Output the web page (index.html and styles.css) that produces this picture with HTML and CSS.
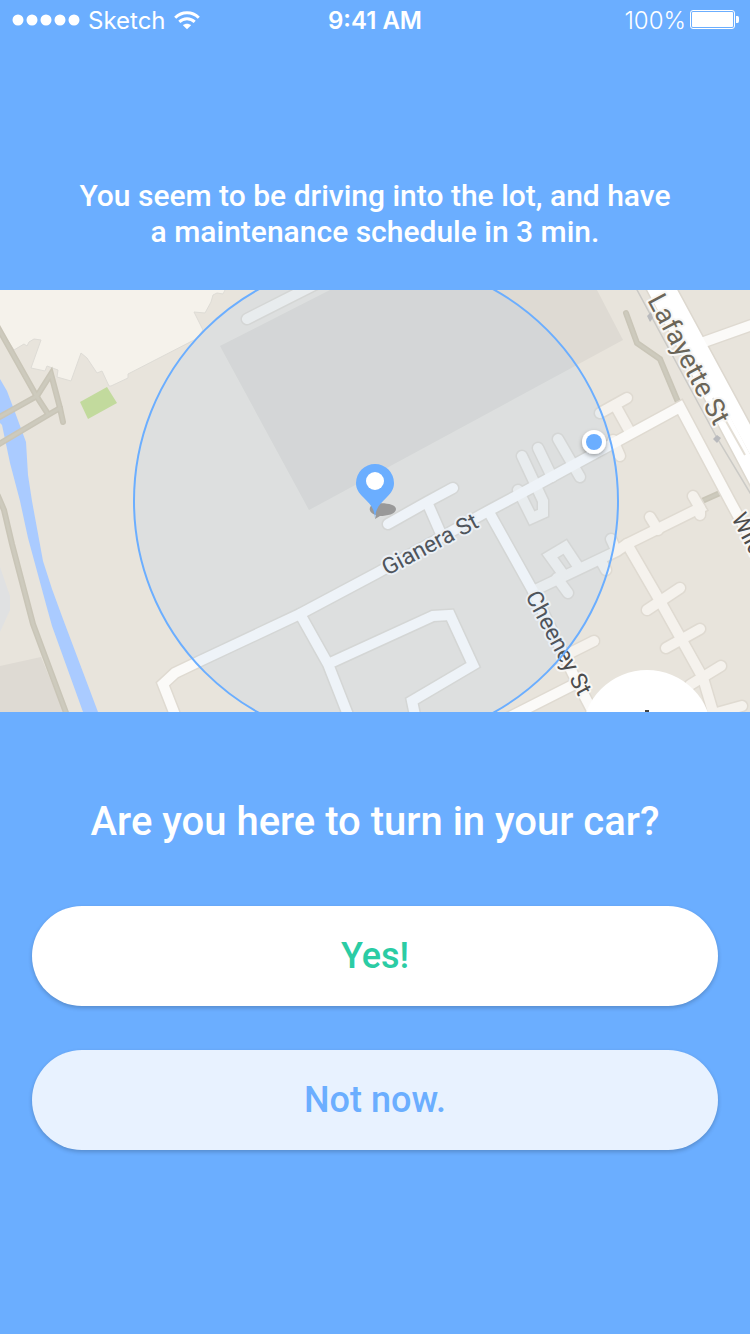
FILE: index.html
```html
<!DOCTYPE html>
<html lang="en">
	<head>
		<meta charset="utf-8" />
		<meta name="viewport" content="width=device-width, initial-scale=1" />
		<title>Turn in your car</title>
		<link rel="stylesheet" href="styles.css">
	</head>
	<body>

		<header class="status">
			<div class="carrier">
				<svg width="68" height="12" viewBox="0 0 68 12" aria-hidden="true">
					<g fill="#fff">
						<circle cx="6" cy="6" r="5.5"/>
						<circle cx="20" cy="6" r="5.5"/>
						<circle cx="34" cy="6" r="5.5"/>
						<circle cx="48" cy="6" r="5.5"/>
						<circle cx="62" cy="6" r="5.5"/>
					</g>
				</svg>
				<span>Sketch</span>
				<svg width="26" height="19" viewBox="0 0 26 19" aria-hidden="true">
					<g fill="none" stroke="#fff" stroke-width="2.9">
						<path d="M1.2 6.8C7.8 .1 18.2 .1 24.8 6.8"/>
						<path d="M5.3 10.9C9.6 6.6 16.4 6.6 20.7 10.9"/>
					</g>
					<path fill="#fff" d="M13 18.2L8.9 14.2C11.2 12.2 14.8 12.2 17.1 14.2z"/>
				</svg>
			</div>
			<div class="time">9:41 AM</div>
			<div class="battery">
				<span>100%</span>
				<svg width="50" height="20" viewBox="0 0 50 20" aria-hidden="true">
					<rect x=".5" y=".5" width="44" height="18" rx="2.5" fill="none" stroke="#fff"/>
					<rect x="2" y="2" width="41" height="15" rx="1" fill="#fff"/>
					<path fill="#fff" d="M46 6h1.5q1.5 0 1.5 2v3q0 2-1.5 2H46z"/>
				</svg>
			</div>
		</header>

		<main>
			<p class="notice">You seem to be driving into the lot, and have<br>a maintenance schedule in 3 min.</p>

			<svg class="map" viewBox="0 0 750 422" role="img" aria-label="Map around Gianera St">
				<defs>
					<g id="lanes">
						<path d="M247 29L320 -8"/>
						<path d="M522 166L543 211V223L532 228L518 200"/>
						<path d="M538 158L552 187M558 149L580 187"/>
						<path d="M600 123L627 108M615 115L630 142M613 150L620 166"/>
						<path d="M533 301L617 261L627 254L700 218L693 206"/>
						<path d="M563 284L550 266L565 257L579 278M557 288L568 303"/>
						<path d="M611 249L616 260M601 271L606 280M650 227L658 240M700 218V225"/>
						<path d="M627 254L660 311L703 388L713 422"/>
						<path d="M647 320L680 298M666 358L700 339M690 395L721 376M713 424L742 416"/>
						<path d="M594 351L568 364"/>
					</g>
					<g id="streets">
						<path d="M177 430L163 394L175 383L200 371L300 324L377 283L490 220L533 197L680 117L730 211L755 257"/>
						<path d="M300 324L328 374L350 430M328 374L433 326L450 325L473 375L412 411L416 430"/>
						<path d="M388 234L427 212L453 198M427 212L441 244"/>
						<path d="M490 224L533 301L573 384L597 430M573 395L500 432"/>
						<path d="M704 52L760 32"/>
					</g>
					<g id="avenue">
						<path d="M652 -6L760 198"/>
						<path d="M666 -6L760 168"/>
					</g>
					<g id="tracks">
						<path d="M-4 34L37 107L48 124"/>
						<path d="M-4 129L37 106L51 84L60 118L63 132"/>
						<path d="M-4 156L48 125L60 118"/>
						<path d="M-2 206L4 220L12 254L33 334L43 361L68 428"/>
						<path d="M626 23L637 53L660 69L678 112M702 211L720 203"/>
					</g>
					<filter id="soft" x="-20%" y="-20%" width="140%" height="150%">
						<feDropShadow dx="0" dy="2" stdDeviation="2" flood-opacity=".35"/>
					</filter>
				</defs>

				<!-- ground -->
				<rect width="750" height="422" fill="#e8e4dc"/>
				<path fill="#f5f2eb" stroke="#dedcd6" d="M-2 -2H226L223 4L217 3L213 5L211 12L205 23L194 22L203 40L196 49L128 84V88L111 96L109 96L102 81L97 83L87 68L81 63L71 91L57 87L58 80L47 76L45 81L31 78L41 50L34 49L29 52L27 56L24 54L14 60L-2 36z"/>
				<path fill="#c2da9d" d="M80 112L107 97L117 113L88 129z"/>
				<path fill="#dedad3" d="M0 376L41 367L64 422H0zM220 56L330 0H597L623 50L309 220z"/>
				<path fill="#e0e1e2" d="M0 277L10 306V320L0 342z"/>
				<path fill="#aacbff" d="M0 89L7 101L16 125L26 152L28 185L32 211L43 271L52 299L63 329L98 422H83L52 336L47 318L28 248L20 211L10 173L2 135L0 133z"/>

				<!-- roads: edge first, then surface -->
				<use href="#tracks" class="road track-edge"/>
				<use href="#tracks" class="road track"/>
				<path d="M636 -2L717 148L752 206" fill="none" stroke="#cbcac6" stroke-width="1.5"/>
				<path d="M647 26l4 -4 2 6 -3 4zM713 149l4 -4 4 3 -4 5z" fill="#b9babd"/>
				<use href="#lanes" class="road lane-edge"/>
				<use href="#streets" class="road street-edge"/>
				<use href="#avenue" class="road avenue-edge"/>
				<use href="#lanes" class="road lane"/>
				<use href="#streets" class="road street"/>
				<use href="#avenue" class="road avenue"/>
				<path d="M713 108L745 165" stroke="#e3ded5" stroke-width="2"/>

				<g class="names">
					<text transform="translate(387 286) rotate(-28)">Gianera St</text>
					<text transform="translate(525 306) rotate(62)">Cheeney St</text>
					<text class="major" transform="translate(647 10) rotate(62)">Lafayette St</text>
					<text transform="translate(731 228) rotate(62)">Wild</text>
				</g>

				<circle cx="376" cy="211" r="242" fill="#6baeff" fill-opacity=".09" stroke="#6baeff" stroke-width="2"/>

				<!-- lot pin -->
				<path fill="#999" d="M375 229L376 225C368 223 368 216 374 214C383 212 396 214 396 219C396 224 387 226 380 226z"/>
				<path fill="#6baeff" d="M375 228C374 217 370 214 363 207C359 203 356 199 356 193A19 19 0 0 1 394 193C394 199 391 203 387 207C380 214 376 217 375 228z"/>
				<circle cx="375" cy="191" r="9" fill="#fff"/>

				<!-- car position -->
				<circle cx="594" cy="152" r="12" fill="#fff" filter="url(#soft)"/>
				<circle cx="594" cy="152" r="8" fill="#6baeff"/>

				<circle cx="647" cy="445" r="65" fill="#fff"/>
				<path fill="#444" d="M645 420h4v4h-4z"/>
			</svg>

			<section class="ask">
				<h1>Are you here to turn in your car?</h1>
				<button type="button" class="btn yes">Yes!</button>
				<button type="button" class="btn no">Not now.</button>
			</section>
		</main>

	</body>
</html>
```
FILE: styles.css
```css
*{
	margin: 0;
	padding: 0;
	box-sizing: border-box;
}
body{
	min-height: 100vh;
	background: #6baeff;
	color: #fff;
	font-family: Roboto, "Liberation Sans", sans-serif;
}

.status{
	display: grid;
	grid-template-columns: 1fr auto 1fr;
	align-items: center;
	height: 40px;
	padding: 0 12px;
	font-family: Inter, "Liberation Sans", sans-serif;
	font-size: 24px;
}
.carrier,
.battery{
	display: flex;
	align-items: center;
	gap: 8px;
}
.battery{
	justify-content: flex-end;
	gap: 4px;
	margin-right: -2px;
}
.battery span{
	font-weight: 300;
}
.time{
	font-weight: 600;
}

.notice{
	padding: 138px 32px 40px;
	font-size: 30px;
	font-weight: 500;
	line-height: 36px;
	text-align: center;
}

/* map */
.map{
	display: block;
	width: 100%;
	height: auto;
}
.road{
	fill: none;
	stroke-linecap: round;
	stroke-linejoin: miter;
}
.track-edge{
	stroke: #c9c5b7;
	stroke-width: 6px;
}
.track{
	stroke: #cdcabd;
	stroke-width: 3px;
}
.lane-edge,
.street-edge{
	stroke: #dfdad1;
	stroke-width: 13px;
}
.lane{
	stroke: #f5f2ed;
	stroke-width: 10px;
}
.street{
	stroke: #fbfaf8;
	stroke-width: 10px;
}
.avenue-edge{
	stroke: #ddd8cf;
	stroke-width: 17px;
}
.avenue{
	stroke: #fff;
	stroke-width: 14px;
}
.names{
	fill: #4c4c4c;
	stroke: #f8f7f5;
	stroke-width: 4px;
	stroke-linejoin: round;
	paint-order: stroke;
	font-size: 23px;
}
.names .major{
	fill: #6b6558;
	font-size: 27px;
}

.ask{
	display: flex;
	flex-direction: column;
	gap: 44px;
	padding: 86px 32px 44px;
}
.ask h1{
	margin-bottom: 16px;
	font-size: 40px;
	font-weight: 500;
	line-height: 48px;
	text-align: center;
}
.btn{
	width: 100%;
	height: 100px;
	border: 0;
	border-radius: 50px;
	box-shadow: 0 2px 4px rgba(0,0,0,0.2);
	font-family: inherit;
	font-size: 36px;
	font-weight: 500;
	cursor: pointer;
}
.yes{
	background: #fff;
	color: #2bcca4;
}
.no{
	background: #e8f2ff;
	color: #6baeff;
}
```
